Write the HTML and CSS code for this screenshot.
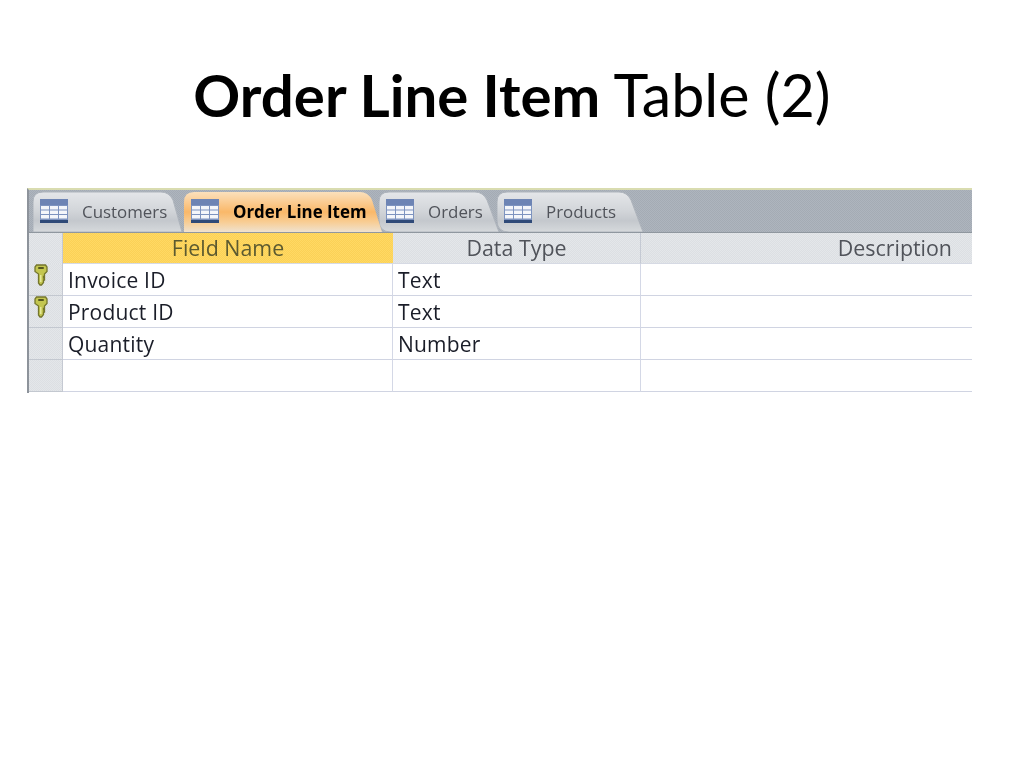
FILE: index.html
```html
<!DOCTYPE html>
<html lang="en">
<head>
<meta charset="utf-8">
<title>Order Line Item Table (2)</title>
<link rel="stylesheet" href="styles.css">
</head>
<body>
<svg class="defs" width="0" height="0" aria-hidden="true">
  <defs>
    <linearGradient id="inactive" x1="0" y1="0" x2="0" y2="1"><stop offset="0" stop-color="#e4e6e9"/><stop offset="0.45" stop-color="#d3d6da"/><stop offset="0.72" stop-color="#c4c8cd"/><stop offset="1" stop-color="#d6d9dc"/></linearGradient>
    <linearGradient id="active" x1="0" y1="0" x2="0" y2="1"><stop offset="0" stop-color="#fbe0bc"/><stop offset="0.5" stop-color="#fab869"/><stop offset="0.75" stop-color="#f8cd94"/><stop offset="1" stop-color="#efe2cf"/></linearGradient>
    <symbol id="table-icon" viewBox="0 0 28 24">
      <rect x="0" y="0" width="28" height="24" fill="#7d93bf"/>
      <rect x="0" y="0" width="28" height="6" fill="#6d84b4"/>
      <rect x="0" y="21" width="28" height="3" fill="#2f4a78"/>
      <g fill="#f4f6fa">
        <rect x="1" y="7" width="8" height="3.500"/><rect x="10" y="7" width="8" height="3.500"/><rect x="19" y="7" width="8" height="3.500"/>
        <rect x="1" y="11.500" width="8" height="3.500"/><rect x="10" y="11.500" width="8" height="3.500"/><rect x="19" y="11.500" width="8" height="3.500"/>
        <rect x="1" y="16" width="8" height="3.500"/><rect x="10" y="16" width="8" height="3.500"/><rect x="19" y="16" width="8" height="3.500"/>
      </g>
    </symbol>
    <symbol id="key-icon" viewBox="0 0 14 22">
      <path d="M2.500 1H11.500L13 3V7.500L10.500 10V12.500H9.500V14H10.500V16H9.500V18.500L7.500 21H6L4.500 19V10L1 7.500V3Z" fill="#c3c650" stroke="#74762c" stroke-width="1.300"/>
      <rect x="4" y="3" width="6" height="2" rx="1" fill="#55571f"/>
      <rect x="6" y="11" width="1.500" height="7" fill="#e6e89a"/>
    </symbol>
  </defs>
</svg>
<main class="slide">
  <h1 class="title"><strong>Order Line Item</strong> Table (2)</h1>
  <figure class="shot">
    <div class="tabbar">
      <div class="tab tab-a">
        <svg class="tab-shape" viewBox="0 0 150 42" preserveAspectRatio="none"><path d="M0 42V12Q0 2 10 2H128Q136 2 140 10L149 42Z" fill="url(#inactive)" stroke="#aeb4bc"/></svg>
        <svg class="tab-icon"><use href="#table-icon"/></svg><span class="tab-label">Customers</span>
      </div>
      <div class="tab tab-b">
        <svg class="tab-shape" viewBox="0 0 198 42" preserveAspectRatio="none"><path d="M0 42V12Q0 2 10 2H176Q184 2 188 10L198 42Z" fill="url(#active)"/></svg>
        <svg class="tab-icon"><use href="#table-icon"/></svg><span class="tab-label tab-label-on">Order Line Item</span>
      </div>
      <div class="tab tab-c">
        <svg class="tab-shape" viewBox="0 0 120 42" preserveAspectRatio="none"><path d="M0 30V12Q0 2 10 2H96Q104 2 108 10L120 42H12Q0 42 0 30Z" fill="url(#inactive)" stroke="#aeb4bc"/></svg>
        <svg class="tab-icon"><use href="#table-icon"/></svg><span class="tab-label">Orders</span>
      </div>
      <div class="tab tab-d">
        <svg class="tab-shape" viewBox="0 0 146 42" preserveAspectRatio="none"><path d="M0 30V12Q0 2 10 2H122Q130 2 134 10L146 42H12Q0 42 0 30Z" fill="url(#inactive)" stroke="#aeb4bc"/></svg>
        <svg class="tab-icon"><use href="#table-icon"/></svg><span class="tab-label">Products</span>
      </div>
    </div>
    <div class="grid">
      <div class="sel sel-head"></div>
      <div class="head head-on">Field Name</div>
      <div class="head">Data Type</div>
      <div class="head head-last">Description</div>

      <div class="sel"><svg class="key"><use href="#key-icon"/></svg></div>
      <div class="cell">Invoice ID</div><div class="cell">Text</div><div class="cell cell-last"></div>

      <div class="sel"><svg class="key"><use href="#key-icon"/></svg></div>
      <div class="cell">Product ID</div><div class="cell">Text</div><div class="cell cell-last"></div>

      <div class="sel"></div>
      <div class="cell">Quantity</div><div class="cell">Number</div><div class="cell cell-last"></div>

      <div class="sel"></div>
      <div class="cell"></div><div class="cell"></div><div class="cell cell-last"></div>
    </div>
  </figure>
</main>
</body>
</html>
```
FILE: styles.css
```css
* { box-sizing: border-box; }
html, body { margin: 0; padding: 0; background: #fff; }
.defs { position: absolute; }
.slide { width: 1024px; height: 768px; overflow: hidden; padding-top: 60px; }
.title {
  margin: 0;
  height: 128px;
  font: 400 59.200px/70px Lato, "Liberation Sans", sans-serif;
  color: #000;
  text-align: center;
}
.title strong { font-weight: 700; font-size: 58.200px; }
.shot {
  margin: 0 0 0 27px;
  width: 945px;
  height: 205px;
  border-top: 2px solid #d9dcb0;
  border-left: 2px solid #8d939b;
  font-family: "Open Sans", "Liberation Sans", sans-serif;
  filter: blur(0.35px);
}
.tabbar {
  display: flex;
  height: 43px;
  padding-left: 4px;
  background: #a9b0b9 repeating-conic-gradient(#a4abb4 0 25%, #aeb5be 0 50%) 0 0 / 2px 2px;
  border-bottom: 1px solid #8f979f;
}
.tab {
  position: relative;
  height: 42px;
  display: flex;
  align-items: center;
  flex: none;
  padding-left: 7px;
}
.tab-shape { position: absolute; inset: 0; width: 100%; height: 100%; }
.tab-a { width: 150px; z-index: 1; }
.tab-b { width: 198px; margin-left: 1px; z-index: 4; }
.tab-c { width: 120px; margin-left: -3px; z-index: 3; }
.tab-d { width: 146px; margin-left: -2px; z-index: 2; }
.tab-icon { position: relative; width: 28px; height: 24px; flex: none; }
.tab-label { position: relative; margin-left: 14px; font-size: 16.900px; color: #50535a; white-space: nowrap; }
.tab-label-on { font-weight: 700; color: #000; }
.grid {
  display: grid;
  grid-template-columns: 34px 330px 248px 331px;
  grid-template-rows: 31px repeat(4, 32px);
}
.sel, .head { background: #e0e3e7 repeating-conic-gradient(#dcdfe3 0 25%, #e4e7ea 0 50%) 0 0 / 2px 2px; }
.sel { border-bottom: 1px solid #c3c8d0; border-right: 1px solid #c5c9d2; padding-left: 5px; }
.sel-head { border-bottom: 0; }
.key { display: block; width: 14px; height: 22px; }
.head {
  font-size: 21.400px;
  line-height: 30px;
  text-align: center;
  color: #50535a;
  border-right: 1px solid #c4c9d3;
  border-bottom: 1px solid #d6dae4;
}
.head-on {
  color: #5c5a30;
  background: #fdd45c repeating-conic-gradient(#fbd156 0 25%, #ffd964 0 50%) 0 0 / 2px 2px;
  border-right: 0;
}
.head-last { text-align: right; padding-right: 20px; border-right: 0; }
.cell {
  font-size: 21px;
  letter-spacing: 0.200px;
  line-height: 33px;
  padding-left: 5px;
  color: #1a1d28;
  border-right: 1px solid #d4d8e6;
  border-bottom: 1px solid #d0d4e2;
}
.cell-last { border-right: 0; }
```
